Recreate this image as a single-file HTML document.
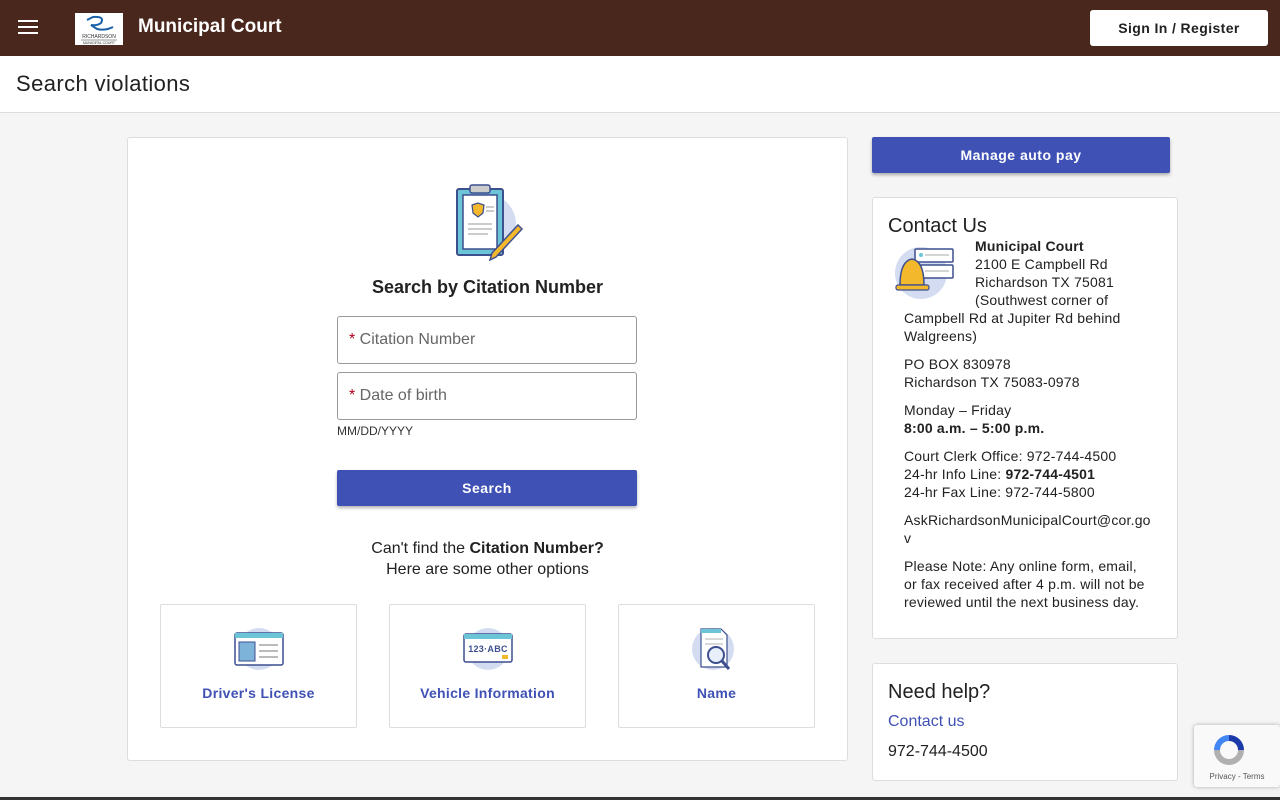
<!DOCTYPE html>
<html><head><meta charset="utf-8"><style>
*{box-sizing:border-box;margin:0;padding:0}
body{width:1280px;height:800px;overflow:hidden;background:#f5f5f5;font-family:"Liberation Sans",Roboto,sans-serif;color:#212121;position:relative}
.top{position:absolute;left:0;top:0;width:1280px;height:56px;background:#4a271d;box-shadow:0 2px 4px rgba(0,0,0,.3)}
.sub{position:absolute;top:56px;left:0;width:1280px;height:57px;background:#fff;border-bottom:1px solid #ddd}
.card{position:absolute;background:#fff;border:1px solid #ddd;border-radius:3px}
.btn{position:absolute;background:#3f51b5;color:#fff;font-weight:bold;font-size:14px;letter-spacing:.5px;text-align:center;border-radius:2px;box-shadow:0 2px 3px rgba(0,0,0,.3)}
.inp{position:absolute;left:337px;width:300px;height:48px;border:1px solid #999;border-radius:3px;font-size:16px;color:#666;padding:14px 11px}
.inp b{color:#b00020;font-weight:normal}
.opt{position:absolute;top:604px;width:197px;height:124px;border:1px solid #ddd;border-radius:2px;text-align:center;color:#3f51b5;font-weight:bold;font-size:14px;letter-spacing:.3px}
.opt svg{position:absolute;left:72px;top:20px}
.opt span{position:absolute;left:0;right:0;top:80px}
.ci{position:absolute;left:904px;font-size:14px;line-height:18px;color:#212121;letter-spacing:.2px}
</style></head><body>
<div class="top">
 <div style="position:absolute;left:18px;top:20px;width:20px;height:2px;background:#fff;box-shadow:0 6px 0 #fff,0 12px 0 #fff"></div>
 <div style="position:absolute;left:75px;top:13px;width:48px;height:32px;background:#fff">
  <svg width="48" height="32"><path d="M12 7 L18 4 Q30 3 26 10 Q22 13 16 12 L22 16 Q30 18 38 14" stroke="#1a5fa8" stroke-width="2" fill="none"/><text x="24" y="25" font-size="5" text-anchor="middle" fill="#333" font-family="Liberation Sans">RICHARDSON</text><line x1="6" y1="27" x2="42" y2="27" stroke="#333" stroke-width=".5"/><text x="24" y="31" font-size="3.5" text-anchor="middle" fill="#333" font-family="Liberation Sans">MUNICIPAL COURT</text></svg>
 </div>
 <div style="position:absolute;left:138px;top:16px;color:#fff;font-size:19px;font-weight:bold">Municipal Court</div>
 <div style="position:absolute;left:1090px;top:10px;width:178px;height:36px;background:#fff;border-radius:3px;font-size:14px;font-weight:bold;letter-spacing:.4px;text-align:center;line-height:36px;color:#212121">Sign In / Register</div>
</div>
<div class="sub"><div style="position:absolute;left:16px;top:15px;font-size:22px;letter-spacing:.4px">Search violations</div></div>

<div class="card" style="left:127px;top:137px;width:721px;height:624px"></div>
<svg style="position:absolute;left:448px;top:180px" width="80" height="85">
 <circle cx="38" cy="44" r="30" fill="#d4dcf2"/>
 <rect x="9" y="9" width="46" height="66" rx="2" fill="#6cc5d6" stroke="#3d4f8f" stroke-width="2"/>
 <rect x="15" y="15" width="34" height="54" fill="#fff" stroke="#3d4f8f" stroke-width="1.5"/>
 <rect x="22" y="5" width="20" height="8" rx="2" fill="#ccc" stroke="#3d4f8f" stroke-width="1.5"/>
 <path d="M24 25 L30 23 L36 25 L35 33 L30 37 L25 33Z" fill="#f3b82c" stroke="#3d4f8f" stroke-width="1.2"/>
 <g stroke="#bbb" stroke-width="1.5"><line x1="38" y1="27" x2="46" y2="27"/><line x1="38" y1="31" x2="46" y2="31"/><line x1="20" y1="44" x2="44" y2="44"/><line x1="20" y1="49" x2="44" y2="49"/><line x1="20" y1="54" x2="40" y2="54"/></g>
 <path d="M70 45 L74 49 L48 77 L42 80 L44 73Z" fill="#f3b82c" stroke="#3d4f8f" stroke-width="1.5"/>
</svg>
<div style="position:absolute;left:127px;width:721px;top:277px;text-align:center;font-size:18px;font-weight:bold;color:#222">Search by Citation Number</div>
<div class="inp" style="top:316px"><b>*</b> Citation Number</div>
<div class="inp" style="top:372px"><b>*</b> Date of birth</div>
<div style="position:absolute;left:337px;top:424px;font-size:12px;color:#333">MM/DD/YYYY</div>
<div class="btn" style="left:337px;top:470px;width:300px;height:36px;line-height:36px">Search</div>
<div style="position:absolute;left:127px;width:721px;top:538px;text-align:center;font-size:16px;line-height:21px">Can't find the <b>Citation Number?</b><br>Here are some other options</div>
<div class="opt" style="left:160px"><svg width="52" height="46"><circle cx="26" cy="24" r="21" fill="#d4dcf2"/><rect x="2" y="8" width="48" height="32" rx="2" fill="#fff" stroke="#3d4f8f" stroke-width="1.5"/><rect x="2" y="8" width="48" height="5" fill="#6cc5d6"/><rect x="6" y="17" width="16" height="19" fill="#7db3d9" stroke="#3d4f8f"/><g stroke="#bbb" stroke-width="2"><line x1="26" y1="20" x2="45" y2="20"/><line x1="26" y1="26" x2="45" y2="26"/><line x1="26" y1="32" x2="45" y2="32"/></g></svg><span>Driver's License</span></div>
<div class="opt" style="left:389px"><svg width="52" height="46"><circle cx="26" cy="24" r="21" fill="#d4dcf2"/><rect x="2" y="9" width="48" height="28" rx="2" fill="#fff" stroke="#3d4f8f" stroke-width="1.5"/><rect x="2" y="9" width="48" height="5" fill="#6cc5d6"/><text x="26" y="27" font-size="9" font-weight="bold" text-anchor="middle" fill="#3d4f8f" font-family="Liberation Sans">123·ABC</text><rect x="40" y="30" width="6" height="4" fill="#f3b82c"/></svg><span>Vehicle Information</span></div>
<div class="opt" style="left:618px"><svg width="52" height="48"><circle cx="22" cy="24" r="21" fill="#d4dcf2"/><path d="M10 4 H30 L36 10 V42 H10Z" fill="#fff" stroke="#3d4f8f" stroke-width="1.2"/><rect x="10" y="4" width="20" height="4" fill="#6cc5d6"/><g stroke="#ccc" stroke-width="1.5"><line x1="14" y1="14" x2="32" y2="14"/><line x1="14" y1="19" x2="32" y2="19"/></g><circle cx="25" cy="30" r="8" fill="#e8eefa" stroke="#3d4f8f" stroke-width="2"/><line x1="31" y1="36" x2="38" y2="44" stroke="#3d4f8f" stroke-width="3"/></svg><span>Name</span></div>

<div class="btn" style="left:872px;top:137px;width:298px;height:36px;line-height:36px">Manage auto pay</div>
<div class="card" style="left:872px;top:197px;width:306px;height:442px"></div>
<div style="position:absolute;left:888px;top:215px;font-size:20px">Contact Us</div>
<svg style="position:absolute;left:893px;top:245px" width="64" height="58"><circle cx="28" cy="28" r="26" fill="#d4dcf2"/><rect x="22" y="4" width="38" height="13" rx="1" fill="#fff" stroke="#3d4f8f" stroke-width="1.5"/><rect x="22" y="20" width="38" height="13" rx="1" fill="#fff" stroke="#3d4f8f" stroke-width="1.5"/><circle cx="28" cy="10" r="2" fill="#6cc5d6"/><circle cx="28" cy="26" r="2" fill="#6cc5d6"/><line x1="32" y1="10" x2="56" y2="10" stroke="#aaa"/><line x1="32" y1="26" x2="56" y2="26" stroke="#aaa"/><path d="M7 40 Q7 16 19 14 Q31 16 31 40Z" fill="#f3b82c" stroke="#3d4f8f" stroke-width="1.5"/><rect x="3" y="40" width="33" height="5" rx="2" fill="#f3b82c" stroke="#3d4f8f" stroke-width="1.2"/></svg>
<div class="ci" style="left:975px;top:237px"><b>Municipal Court</b><br>2100 E Campbell Rd<br>Richardson TX 75081<br>(Southwest corner of</div>
<div class="ci" style="top:309px">Campbell Rd at Jupiter Rd behind<br>Walgreens)</div>
<div class="ci" style="top:355px">PO BOX 830978<br>Richardson TX 75083-0978</div>
<div class="ci" style="top:401px">Monday – Friday<br><b>8:00 a.m. – 5:00 p.m.</b></div>
<div class="ci" style="top:447px">Court Clerk Office: 972-744-4500<br>24-hr Info Line: <b>972-744-4501</b><br>24-hr Fax Line: 972-744-5800</div>
<div class="ci" style="top:511px">AskRichardsonMunicipalCourt@cor.go<br>v</div>
<div class="ci" style="top:557px">Please Note: Any online form, email,<br>or fax received after 4 p.m. will not be<br>reviewed until the next business day.</div>
<div class="card" style="left:872px;top:663px;width:306px;height:118px"></div>
<div style="position:absolute;left:888px;top:681px;font-size:20px">Need help?</div>
<div style="position:absolute;left:888px;top:713px;font-size:16px;color:#3f51b5">Contact us</div>
<div style="position:absolute;left:888px;top:743px;font-size:16px">972-744-4500</div>
<div style="position:absolute;left:1194px;top:725px;width:86px;height:62px;background:#f9f9f9;box-shadow:0 0 4px rgba(0,0,0,.3);border-radius:3px">
 <svg style="position:absolute;left:16px;top:6px" width="38" height="38"><path d="M19 4 A15 15 0 0 1 34 19 L28 19 A9 9 0 0 0 19 10Z" fill="#1c3aa9"/><path d="M4 19 A15 15 0 0 1 19 4 L19 10 A9 9 0 0 0 10 19Z" fill="#4285f4"/><path d="M4 19 A15 15 0 0 0 34 19 L28 19 A9 9 0 0 1 10 19Z" fill="#b0b0b0"/></svg>
 <div style="position:absolute;left:0;right:0;top:47px;text-align:center;font-size:8px;color:#555">Privacy - Terms</div>
</div>
<div style="position:absolute;left:0;top:797px;width:1280px;height:3px;background:#333"></div>
</body></html>
